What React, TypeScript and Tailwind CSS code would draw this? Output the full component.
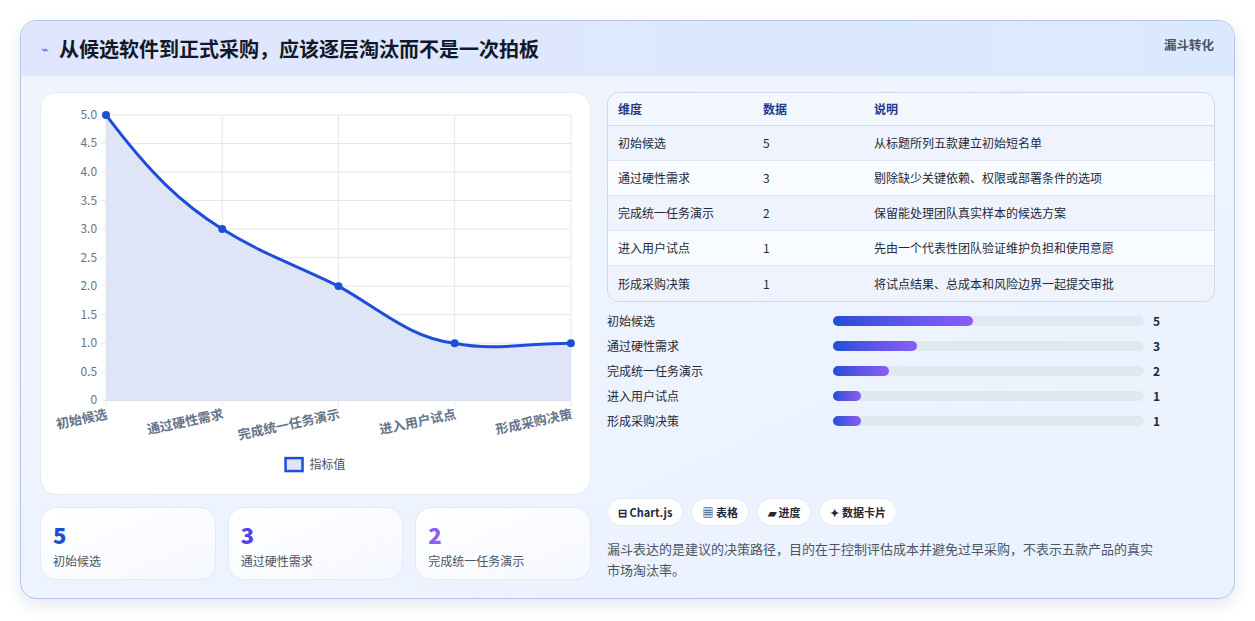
import React from "react";

const F = { fontFamily: '"Noto Sans CJK SC", "Noto Sans", sans-serif' };
const rows = [
  ["初始候选", 5, "从标题所列五款建立初始短名单"],
  ["通过硬性需求", 3, "剔除缺少关键依赖、权限或部署条件的选项"],
  ["完成统一任务演示", 2, "保留能处理团队真实样本的候选方案"],
  ["进入用户试点", 1, "先由一个代表性团队验证维护负担和使用意愿"],
  ["形成采购决策", 1, "将试点结果、总成本和风险边界一起提交审批"],
] as const;

function Chart() {
  const x0 = 65, x1 = 531, y0 = 22, y1 = 308;
  const xs = [0, 1, 2, 3, 4].map((i) => x0 + (i * (x1 - x0)) / 4);
  const vals = [5, 3, 2, 1, 1];
  const ys = vals.map((v) => y1 - (v * (y1 - y0)) / 5);
  const d = `M${xs[0]},${ys[0]} C${xs[0] + 45},${ys[0] + 60} ${xs[1] - 40},${ys[1] - 25} ${xs[1]},${ys[1]} C${xs[1] + 40},${ys[1] + 25} ${xs[2] - 40},${ys[2] - 20} ${xs[2]},${ys[2]} C${xs[2] + 40},${ys[2] + 22} ${xs[3] - 45},${ys[3] - 5} ${xs[3]},${ys[3]} C${xs[3] + 40},${ys[3] + 8} ${xs[4] - 45},${ys[4]} ${xs[4]},${ys[4]}`;
  const ticks = ["0", "0.5", "1.0", "1.5", "2.0", "2.5", "3.0", "3.5", "4.0", "4.5", "5.0"];
  const labels = ["初始候选", "通过硬性需求", "完成统一任务演示", "进入用户试点", "形成采购决策"];
  return (
    <svg viewBox="0 0 550 402" className="w-full h-full" style={F}>
      {ticks.map((t, i) => {
        const y = y1 - (i * (y1 - y0)) / 10;
        return (
          <g key={t}>
            <line x1={x0 - 5} x2={x1} y1={y} y2={y} stroke="#e5e7eb" />
            <text x={x0 - 9} y={y + 4} textAnchor="end" fontSize="12" fill="#6b7280">{t}</text>
          </g>
        );
      })}
      {xs.map((x) => (
        <line key={x} x1={x} x2={x} y1={y0} y2={y1 + 6} stroke="#e5e7eb" />
      ))}
      <line x1={x0} x2={x1} y1={y1} y2={y1} stroke="#cbd5e1" />
      <path d={`${d} L${x1},${y1} L${x0},${y1} Z`} fill="#dfe5f7" />
      <path d={d} fill="none" stroke="#1d4ed8" strokeWidth="3" />
      {xs.map((x, i) => (
        <circle key={i} cx={x} cy={ys[i]} r="4" fill="#1d4ed8" />
      ))}
      {labels.map((l, i) => {
        const x = xs[i] + 2;
        const y = y1 + 18;
        return (
          <text key={l} x={x} y={y} fontSize="13" fill="#64748b" fontWeight="600"
            textAnchor="end" transform={`rotate(-12 ${x} ${y})`}>{l}</text>
        );
      })}
      <rect x="245" y="366" width="17" height="13" fill="#dfe5f7" stroke="#1d4ed8" strokeWidth="2.5" />
      <text x="269" y="377" fontSize="12" fill="#4b5563">指标值</text>
    </svg>
  );
}

export default function App() {
  return (
    <div className="w-[1255px] h-[621px] bg-white p-5 pb-[22px]" style={F}>
      <div className="h-full rounded-2xl border border-[#b6c4e8] bg-gradient-to-br from-[#f1f5fe] to-[#eaf2ff] shadow-[0_6px_16px_rgba(30,58,138,0.12)] overflow-hidden flex flex-col">
        <div className="h-[55px] shrink-0 bg-gradient-to-r from-[#e0e6fd] to-[#dbe9fe] flex items-center justify-between px-5">
          <div className="flex items-center gap-2.5">
            <span className="text-[#3b82f6] text-[13px]">⌁</span>
            <span className="text-[20px] font-bold text-[#111827]">从候选软件到正式采购，应该逐层淘汰而不是一次拍板</span>
          </div>
          <span className="text-[12.5px] font-bold text-[#4b5563] self-start mt-[15px]">漏斗转化</span>
        </div>
        <div className="flex-1 flex gap-4 px-[19px] pt-4 pb-[18px]">
          <div className="w-[551px] flex flex-col gap-3">
            <div className="h-[403px] bg-white rounded-2xl border border-[#e3e9f5]">
              <Chart />
            </div>
            <div className="grid grid-cols-3 gap-3 flex-1">
              {[["5", "初始候选", "text-[#1d4ed8]"], ["3", "通过硬性需求", "text-[#4f46e5]"], ["2", "完成统一任务演示", "text-[#8b5cf6]"]].map(([n, l, c]) => (
                <div key={l} className="rounded-2xl border border-[#e3e9f5] bg-gradient-to-br from-white to-[#f5f8ff] px-3 pt-3">
                  <div className={`text-[22px] font-extrabold leading-7 ${c}`}>{n}</div>
                  <div className="text-[12px] text-[#4b5563] mt-1">{l}</div>
                </div>
              ))}
            </div>
          </div>
          <div className="flex-1 flex flex-col">
            <div className="rounded-xl border border-[#cfd8ea] overflow-hidden bg-[#f3f7fe]">
              <div className="grid grid-cols-[145px_111px_1fr] h-[33px] items-center px-2.5 text-[12px] font-semibold text-[#1e3a8a] border-b border-[#d3dbea]">
                <span>维度</span><span>数据</span><span>说明</span>
              </div>
              {rows.map(([a, b, c], i) => (
                <div key={a} className={`grid grid-cols-[145px_111px_1fr] h-[35px] items-center px-2.5 text-[12px] text-[#1f2937] ${i < 4 ? "border-b border-[#e1e7f2]" : ""} ${i % 2 ? "bg-[#f8fbff]" : "bg-[#eef3fd]"}`}>
                  <span>{a}</span><span>{b}</span><span>{c}</span>
                </div>
              ))}
            </div>
            <div className="flex flex-col gap-[7px] mt-[10px]">
              {rows.map(([a, b]) => (
                <div key={a} className="flex items-center h-[18px] text-[12px] text-[#1f2937]">
                  <span className="w-[226px]">{a}</span>
                  <div className="w-[311px] h-[10px] rounded-full bg-[#e2e8f0]">
                    <div className="h-full rounded-full bg-gradient-to-r from-[#1d4ed8] to-[#8b5cf6]" style={{ width: `${b * 9}%` }} />
                  </div>
                  <span className="ml-[9px] font-bold">{b}</span>
                </div>
              ))}
            </div>
            <div className="mt-auto flex gap-2">
              {["⊟ Chart.js", "▦ 表格", "▰ 进度", "✦ 数据卡片"].map((t) => (
                <span key={t} className="h-[28px] px-2.5 rounded-full bg-white border border-[#e6ebf4] flex items-center text-[11px] font-semibold text-[#1f2937]">{t}</span>
              ))}
            </div>
            <p className="mt-[12px] text-[13px] leading-[21px] text-[#4b5563] pr-[50px]">漏斗表达的是建议的决策路径，目的在于控制评估成本并避免过早采购，不表示五款产品的真实市场淘汰率。</p>
          </div>
        </div>
      </div>
    </div>
  );
}
